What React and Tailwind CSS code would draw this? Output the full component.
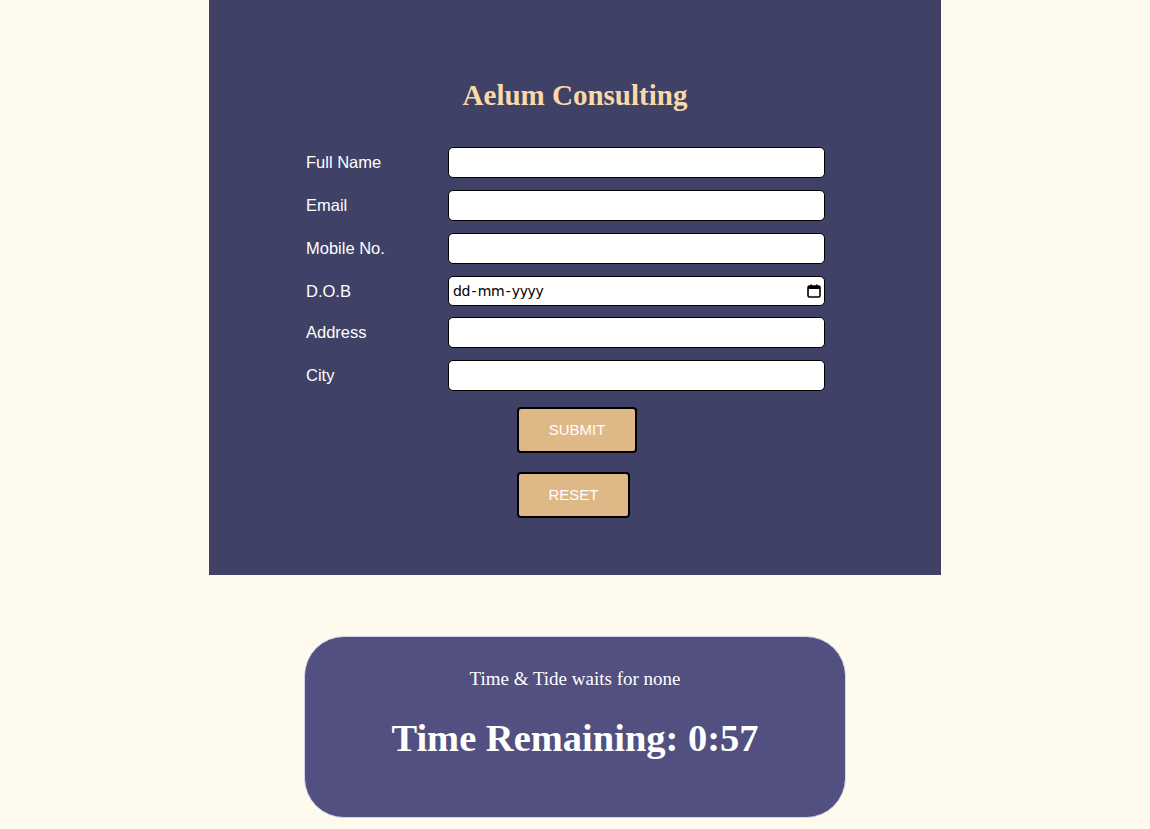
import React from "react";

const rows = ["Full Name", "Email", "Mobile No.", "D.O.B", "Address", "City"];

function CalendarIcon() {
  return (
    <svg width="14" height="14" viewBox="0 0 14 14" className="shrink-0">
      <rect x="1" y="2" width="12" height="11" rx="1.5" fill="none" stroke="#000" strokeWidth="1.6" />
      <rect x="1" y="2" width="12" height="3" fill="#000" />
      <rect x="3.5" y="0.5" width="1.5" height="2" fill="#000" />
      <rect x="9" y="0.5" width="1.5" height="2" fill="#000" />
    </svg>
  );
}

export default function App() {
  return (
    <div className="min-h-[829px] bg-[#fffaee] flex flex-col items-center">
      <div className="w-[732px] h-[575px] bg-[#3f4167] flex flex-col">
        <h1 className="mt-[78px] text-center text-[29px] leading-[34px] font-bold text-[#f9d9a8] font-['Liberation_Serif',serif]">
          Aelum Consulting
        </h1>
        <div className="mt-[35px] pl-[97px] flex flex-col font-['Liberation_Sans',Arial,sans-serif]">
          {rows.map((r, i) => {
            const dob = r === "D.O.B";
            return (
              <div
                key={r}
                className={`flex items-center ${dob ? "h-[30px]" : "h-[31px]"} ${i === 0 ? "" : i === 4 ? "mt-[11px]" : "mt-[12px]"}`}
              >
                <span className="w-[142px] text-white text-[16.5px]">{r}</span>
                {dob ? (
                  <div className="w-[377px] h-[30px] bg-white border border-black rounded-[5px] flex items-center justify-between pl-[4px] pr-[3px]">
                    <span className="text-[14px] text-black font-['DejaVu_Sans',sans-serif] tracking-[-0.4px]">
                      dd<span className="mx-[1.5px]">-</span>mm<span className="mx-[1.5px]">-</span>yyyy
                    </span>
                    <CalendarIcon />
                  </div>
                ) : (
                  <div className="w-[377px] h-[31px] bg-white border border-black rounded-[5px]" />
                )}
              </div>
            );
          })}
          <div className="mt-[16px] ml-[211px] flex flex-col gap-[19px]">
            <button className="w-[120px] h-[46px] bg-[#deb887] border-2 border-black rounded-[4px] text-white text-[15px]">
              SUBMIT
            </button>
            <button className="w-[113px] h-[46px] bg-[#deb887] border-2 border-black rounded-[4px] text-white text-[15px]">
              RESET
            </button>
          </div>
        </div>
      </div>
      <div className="mt-[61px] w-[542px] h-[182px] bg-[#525080] border border-[#d6d4ec] rounded-[40px] flex flex-col items-center font-['Liberation_Serif',serif] text-white">
        <p className="mt-[31px] text-[19px] leading-[22px]">Time &amp; Tide waits for none</p>
        <p className="mt-[26px] text-[38.5px] leading-[44px] font-bold">Time Remaining: 0:57</p>
      </div>
    </div>
  );
}
